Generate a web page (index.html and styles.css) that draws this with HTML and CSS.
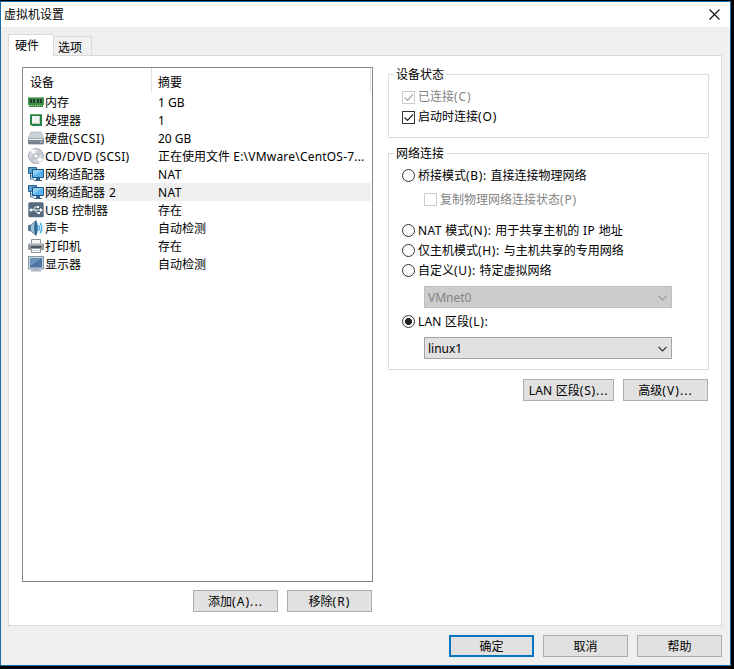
FILE: index.html
```html
<!DOCTYPE html>
<html lang="zh-CN">
<head>
<meta charset="utf-8">
<title>虚拟机设置</title>
<link rel="stylesheet" href="styles.css">
</head>
<body>
<main class="window">
  <header class="titlebar">
    <h1>虚拟机设置</h1>
    <svg class="close" width="11" height="11" viewBox="0 0 11 11"><path d="M.5.5l10 10M10.5.5l-10 10" stroke="#111" stroke-width="1.2"/></svg>
  </header>
  <nav class="tabs"><div class="tab active">硬件</div><div class="tab">选项</div></nav>
  <section class="panel">
    <div class="left">
      <div class="list">
        <div class="head"><div class="c1">设备</div><div class="c2">摘要</div></div>
        <div class="row"><svg class="icon" viewBox="0 0 16 16"><path d="M0 3h16v8h-1v2H1v-2H0z" fill="#3f8d4b"/><path d="M0 3.500h16" stroke="#83bf88"/><path d="M2 5h2v4H2zM5 5h2v4H5zM9 5h2v4H9zM12 5h2v4h-2z" fill="#243e2a"/><path d="M1 11.500h14" stroke="#b9cf80" stroke-dasharray="1 1"/></svg><div class="name">内存</div><div class="sum">1 GB</div></div>
        <div class="row"><svg class="icon" viewBox="0 0 16 16"><rect x="2" y="2" width="12" height="12" fill="#278347"/><path d="M2 2.500h12" stroke="#5aa36b"/><rect x="4" y="4" width="8" height="8" fill="#f0f3f0"/><path d="M4 11.500h7.500V4" stroke="#c5d0c6" fill="none"/><path d="M2 13.500h2" stroke="#d4e370"/></svg><div class="name">处理器</div><div class="sum">1</div></div>
        <div class="row"><svg class="icon" viewBox="0 0 16 16"><path d="M3 2h10l3 7H0z" fill="#cdd2d8" stroke="#a7adb4" stroke-width=".7"/><rect x=".3" y="9" width="15.400" height="5" rx=".7" fill="#7d8792" stroke="#586472" stroke-width=".6"/><path d="M1 9.500h14" stroke="#eef1f4"/><path d="M12 12h2" stroke="#b9e1ed"/></svg><div class="name">硬盘<b class="s6">(SCSI)</b></div><div class="sum">20 GB</div></div>
        <div class="row"><svg class="icon" viewBox="0 0 16 16"><circle cx="8" cy="8" r="7.500" fill="#d4d7dc" stroke="#92979e" stroke-width=".8"/><path d="M8 8L2 3a8 8 0 0 1 5-2zM8 8l7 3a8 8 0 0 1-4 4z" fill="#f7f8fa"/><path d="M8 8l7-2a7 7 0 0 0-4-4zM8 8l-7 2a7 7 0 0 0 4 4z" fill="#c5cad2"/><circle cx="8" cy="8" r="2.500" fill="#eee" stroke="#888e98" stroke-width=".7"/><circle cx="8" cy="8" r="1" fill="#fff"/></svg><div class="name"><b class="s3">CD/DVD (SCSI)</b></div><div class="sum">正在使用文件<b class="s2"> E:\VMware\CentOS-7...</b></div></div>
        <div class="row"><svg class="icon" viewBox="0 0 16 16"><path d="M.5 1.500h8v6h-8z" fill="#5e9dcc" stroke="#2c6592"/><path d="M2.500 8v5H6M2 10h3" stroke="#2c6592" fill="none"/><path d="M4.500 3.500h11v8h-11z" fill="#58b3ee" stroke="#1c5588"/><path d="M5 4h10L5 10z" fill="#8ccff5"/><path d="M8 12h4v2h2v1H6v-1h2z" fill="#376286"/></svg><div class="name">网络适配器</div><div class="sum"><b class="s4">NAT</b></div></div>
        <div class="row selected"><svg class="icon" viewBox="0 0 16 16"><path d="M.5 1.500h8v6h-8z" fill="#5e9dcc" stroke="#2c6592"/><path d="M2.500 8v5H6M2 10h3" stroke="#2c6592" fill="none"/><path d="M4.500 3.500h11v8h-11z" fill="#58b3ee" stroke="#1c5588"/><path d="M5 4h10L5 10z" fill="#8ccff5"/><path d="M8 12h4v2h2v1H6v-1h2z" fill="#376286"/></svg><div class="name">网络适配器<b class="s8"> 2</b></div><div class="sum"><b class="s4">NAT</b></div></div>
        <div class="row"><svg class="icon" viewBox="0 0 16 16"><rect x=".3" y=".3" width="15.400" height="15" rx="1.500" fill="#566b7f"/><path d="M2 8h11M5 8l2-3h3M7 8l2 3h2" fill="none" stroke="#e8eef2"/><path d="M12 6l3 2-3 2zM9 4h2v2H9zM10 10h2v2h-2z" fill="#fff"/><circle cx="3" cy="8" r="1.500" fill="#fff"/></svg><div class="name"><b class="s2">USB </b>控制器</div><div class="sum">存在</div></div>
        <div class="row"><svg class="icon" viewBox="0 0 16 16"><path d="M.5 5.500L3 5l5-4.500v15L3 11l-2.500-.5z" fill="#4d7895" stroke="#3b5a70" stroke-width=".7"/><path d="M3 5l4-3v12l-4-3z" fill="#9fc0d5"/><ellipse cx="8" cy="8" rx="1.800" ry="7" fill="#2b6b96"/><path d="M10.500 5q2 3 0 6M12 3q3 5 0 10" fill="none" stroke="#35a5dd" stroke-width="1.200"/><path d="M13.500 2q3 6 0 12" fill="none" stroke="#a5dbee" stroke-width=".8"/></svg><div class="name">声卡</div><div class="sum">自动检测</div></div>
        <div class="row"><svg class="icon" viewBox="0 0 16 16"><path d="M3.500 1.500h9v6h-9z" fill="#f3f4f5" stroke="#8d949a"/><rect y="5.500" width="16" height="6.500" rx="1" fill="#9299a0"/><path d="M1 6h14" stroke="#cdd1d5"/><path d="M3 8h10v2H3z" fill="#4e565e"/><path d="M3.500 10.500h9v4h-9z" fill="#fff" stroke="#8b959e"/><path d="M4 12.500h8" stroke="#b6d3e7"/></svg><div class="name">打印机</div><div class="sum">存在</div></div>
        <div class="row"><svg class="icon" viewBox="0 0 16 16"><rect x=".5" y=".5" width="15" height="12.500" fill="#cbd5df" stroke="#8998a6"/><rect x="2" y="2" width="12" height="9.500" fill="#4d75a4"/><path d="M2 2h12L2 10z" fill="#6e93bb"/><path d="M6 13h4v1h3v1.500H3V14h3z" fill="#a8b1b9"/></svg><div class="name">显示器</div><div class="sum">自动检测</div></div>
      </div>
      <div class="buttons"><button>添加<b class="s10">(A)...</b></button><button>移除<b class="s10">(R)</b></button></div>
    </div>
    <div class="right">
      <fieldset class="group status"><legend>设备状态</legend>
        <div class="option disabled"><i class="check"><svg viewBox="0 0 13 13"><path d="M2.500 6.500l3 3L11 3.500"/></svg></i><span>已连接<b class="s8">(C)</b></span></div>
        <div class="option"><i class="check"><svg viewBox="0 0 13 13"><path d="M2.500 6.500l3 3L11 3.500"/></svg></i><span>启动时连接<b class="s8">(O)</b></span></div>
      </fieldset>
      <fieldset class="group network"><legend>网络连接</legend>
        <div class="option"><i class="radio"></i><span>桥接模式<b class="s6">(B): </b>直接连接物理网络</span></div>
        <div class="option disabled copy"><i class="check"></i><span>复制物理网络连接状态<b class="s8">(P)</b></span></div>
        <div class="option"><i class="radio"></i><span><b class="s4">NAT </b>模式<b class="s6">(N): </b>用于共享主机的<b class="s5"> IP </b>地址</span></div>
        <div class="option host"><i class="radio"></i><span>仅主机模式<b class="s6">(H): </b>与主机共享的专用网络</span></div>
        <div class="option custom"><i class="radio"></i><span>自定义<b class="s6">(U): </b>特定虚拟网络</span></div>
        <div class="combo disabled"><span>VMnet0</span><svg width="9" height="6" viewBox="0 0 9 6"><path d="M.5.8l4 4 4-4"/></svg></div>
        <div class="option lan"><i class="radio on"></i><span><b class="s2">LAN </b>区段<b class="s6">(L):</b></span></div>
        <div class="combo"><span>linux1</span><svg width="9" height="6" viewBox="0 0 9 6"><path d="M.5.8l4 4 4-4"/></svg></div>
      </fieldset>
      <div class="buttons"><button class="wide"><b class="s2">LAN </b>区段<b class="s8">(S)...</b></button><button>高级<b class="s10">(V)...</b></button></div>
    </div>
  </section>
  <footer class="buttons"><button class="primary">确定</button><button>取消</button><button>帮助</button></footer>
</main>
</body>
</html>
```
FILE: styles.css
```css
* { box-sizing: border-box; }
body {
  margin: 0;
  padding-top: 1px;
  height: 669px;
  overflow: hidden;
  background: #000;
  color: #000;
  font: 12px/18px "Noto Sans", "Noto Sans CJK SC", sans-serif;
}
/* Latin runs are tracked slightly wider than the ideographs */
b { font-weight: 400; white-space: pre; }
.s2 { letter-spacing: .2px; }
.s3 { letter-spacing: .3px; }
.s4 { letter-spacing: .4px; }
.s5 { letter-spacing: .5px; }
.s6 { letter-spacing: .65px; }
.s8 { letter-spacing: .85px; }
.s10 { letter-spacing: 1.05px; }
.window {
  width: 731px;
  height: 665px;
  border: 1px solid #1b6cab;
  background: #efefef;
  white-space: nowrap;
}
.titlebar {
  height: 25px;
  background: #fff;
  display: flex;
  align-items: center;
  justify-content: space-between;
  padding: 0 10px 0 3px;
}
h1 { margin: 0; font-size: 12px; font-weight: 400; }
.close { margin-top: -1px; }
.tabs {
  display: flex;
  align-items: flex-end;
  height: 29px;
  padding-left: 7px;
  margin-bottom: -1px;
  position: relative;
}
.tab {
  width: 38px;
  height: 20px;
  border: 1px solid #d9d9d9;
  border-left: 0;
  padding-left: 4px;
  line-height: 21px;
  background: #f0f0f0;
}
.tab.active {
  width: 46px;
  height: 22px;
  border-left: 1px solid #d9d9d9;
  border-bottom: 0;
  padding-left: 6px;
  line-height: 22px;
  background: #fff;
}
.panel {
  width: 714px;
  height: 571px;
  margin-left: 7px;
  border: 1px solid #d9d9d9;
  background: #fff;
  display: flex;
  gap: 15px;
  padding: 11px 0 0 13px;
}
.left { width: 351px; }
.list {
  height: 515px;
  border: 1px solid #828790;
}
.head { display: flex; height: 25px; width: 348px; border-right: 1px solid #e2e2e2; line-height: 30px; }
.c1 { width: 129px; border-right: 1px solid #e2e2e2; padding-left: 7px; }
.c2 { padding-left: 6px; }
.row { display: flex; align-items: center; height: 18px; padding-left: 5px; }
.icon { width: 16px; height: 16px; flex: none; }
.name, .sum { padding-top: 2px; }
.name { width: 108px; margin-left: 1px; }
.sum { width: 218px; padding-left: 5px; flex: none; }
.selected { background: linear-gradient(90deg, transparent 22px, #efefef 22px 348px, transparent 348px); }
.buttons { display: flex; justify-content: flex-end; gap: 9px; }
.left .buttons { margin-top: 8px; padding-right: 1px; }
button {
  width: 85px;
  height: 22px;
  padding: 2px 0 0;
  border: 1px solid #adadad;
  background: #e1e1e1;
  color: #000;
  font: inherit;
  line-height: 18px;
  white-space: nowrap;
}
.wide { width: 91px; }
.primary { border: 2px solid #0875c1; padding-top: 1px; }
.right { width: 321px; padding-top: 7px; }
.group {
  position: relative;
  margin: 0;
  padding: 13px 0 0 13px;
  border: 1px solid #dcdcdc;
  min-width: 0;
}
legend {
  position: absolute;
  left: 5px;
  top: -9px;
  padding: 0 2px;
  background: #fff;
  line-height: 18px;
}
.status { height: 64px; margin-bottom: 15px; }
.network { height: 217px; }
.option { display: flex; align-items: center; gap: 3px; height: 18px; }
.status .option { margin-bottom: 2px; }
.option.disabled { color: #838383; }
.check, .radio { display: block; width: 13px; height: 13px; border: 1px solid #333; flex: none; }
.check svg { display: block; width: 13px; height: 13px; margin: -1px; }
.check path { fill: none; stroke: #222; stroke-width: 1.2; }
.disabled .check { border-color: #ccc; }
.disabled .check path { stroke: #aaa; }
.radio { border-radius: 50%; margin-bottom: 2px; }
.radio.on { background: radial-gradient(circle, #222 3.2px, transparent 3.8px); }
.copy { margin: 6px 0 13px 22px; }
.copy .check { margin-bottom: 2px; }
.host, .custom { margin-top: 2px; }
.combo {
  display: flex;
  align-items: center;
  justify-content: space-between;
  width: 248px;
  height: 22px;
  margin: 6px 0 0 22px;
  padding: 1px 4px 0 3px;
  border: 1px solid #a4a4a4;
  background: #e1e1e1;
}
.combo.disabled { background: #ccc; border-color: #bfbfbf; color: #838383; }
.combo path { fill: none; stroke: #333; stroke-width: 1.2; }
.combo.disabled path { stroke: #999; }
.lan { margin-top: 5px; margin-bottom: 6px; }
.right .buttons { margin-top: 9px; padding-right: 1px; }
footer { padding: 9px 8px 0 0; }
```
